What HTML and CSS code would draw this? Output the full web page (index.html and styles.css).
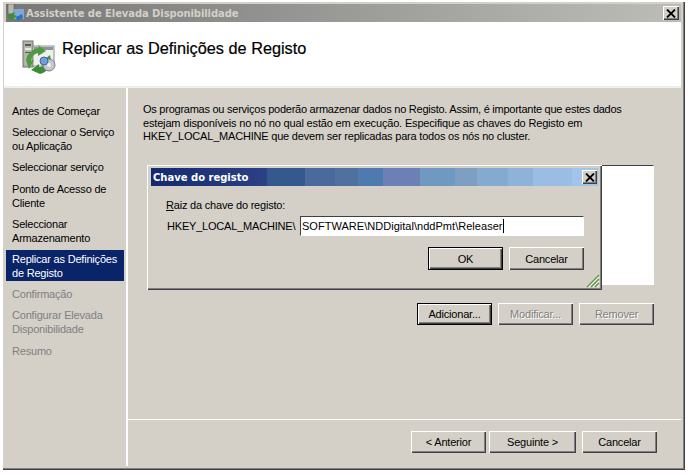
FILE: index.html
```html
<!DOCTYPE html>
<html lang="pt">
<head>
<meta charset="utf-8">
<title>Assistente de Elevada Disponibilidade</title>
<link rel="stylesheet" href="styles.css">
</head>
<body>
<div class="window">
  <div class="titlebar">
    <svg class="title-icon" width="18" height="18" viewBox="0 0 18 18">
      <rect x="1" y="0" width="6" height="10" fill="#b8b8b0" stroke="#555" stroke-width="0.6"/>
      <rect x="7" y="5" width="10" height="10" fill="#7fa8d8"/>
      <path d="M1 11 L8 8 L7 11 L10 12 L5 16 L1 14 Z" fill="#3f8f3a"/>
      <path d="M9 13 L15 10 L16 14 L10 17 Z" fill="#2f6fc0"/>
    </svg>
    <span class="title-text">Assistente de Elevada Disponibilidade</span>
    <button class="close close-main" aria-label="Fechar"><svg width="10" height="9" viewBox="0 0 10 9"><path d="M1 0.5 L9 8.5 M9 0.5 L1 8.5" stroke="#000" stroke-width="1.8"/></svg></button>
  </div>
  <header class="header">
    <svg class="header-icon" width="36" height="34" viewBox="0 0 36 34">
      <rect x="1" y="1" width="10" height="26" fill="#b4b4ac" stroke="#70706a"/>
      <rect x="3" y="4" width="6" height="2" fill="#5a5a55"/>
      <rect x="3" y="8" width="6" height="2" fill="#e8e8e0"/>
      <rect x="3" y="12" width="6" height="1" fill="#5a5a55"/>
      <rect x="11" y="6" width="21" height="20" fill="#eef0ee" stroke="#8a8f90"/>
      <rect x="12" y="7" width="19" height="3" fill="#8f9498"/>
      <path d="M4 20 Q6 10 17 8 L16 5 L24 11 L16 16 L16 13 Q10 14 9 21 L12 20 L7 29 Z" fill="#4e9a3e"/>
      <path d="M9 30 L18 34 Q26 32 28 24 L30 25 L28 15 L21 21 L24 22 Q22 27 17 27 L17 24 Z" fill="#3d8c35"/>
      <circle cx="27" cy="25" r="6" fill="#c4c8cc" stroke="#7d8288"/>
      <circle cx="22" cy="21" r="4" fill="#6f9fd8" stroke="#39689f"/>
      <circle cx="27" cy="25" r="2" fill="#eef0f2"/>
    </svg>
    <h1 class="heading">Replicar as Definições de Registo</h1>
  </header>
  <div class="body">
    <nav class="nav">
      <div class="step">Antes de Começar</div>
      <div class="step">Seleccionar o Serviço<br>ou Aplicação</div>
      <div class="step">Seleccionar serviço</div>
      <div class="step">Ponto de Acesso de<br>Cliente</div>
      <div class="step">Seleccionar<br>Armazenamento</div>
      <div class="step current">Replicar as Definições<br>de Registo</div>
      <div class="step muted">Confirmação</div>
      <div class="step muted">Configurar Elevada<br>Disponibilidade</div>
      <div class="step muted">Resumo</div>
    </nav>
    <main class="main">
      <div class="content">
        <p class="intro"><span class="line-tight">Os programas ou serviços poderão armazenar dados no Registo. Assim, é importante que estes dados</span><br><span class="line-loose">estejam disponíveis no nó no qual estão em execução. Especifique as chaves do Registo em</span><br>HKEY_LOCAL_MACHINE que devem ser replicadas para todos os nós no cluster.</p>
        <div class="listbox"></div>
        <div class="list-actions">
          <button class="btn default">Adicionar...</button>
          <button class="btn disabled">Modificar...</button>
          <button class="btn disabled">Remover</button>
        </div>
      </div>
      <footer class="footer">
        <button class="btn">&lt; Anterior</button>
        <button class="btn wide">Seguinte &gt;</button>
        <button class="btn cancel">Cancelar</button>
      </footer>
    </main>
  </div>
  <section class="dialog">
    <div class="dialog-title">
      <span>Chave do registo</span>
      <button class="close close-dialog" aria-label="Fechar"><svg width="10" height="9" viewBox="0 0 10 9"><path d="M1 0.5 L9 8.5 M9 0.5 L1 8.5" stroke="#000" stroke-width="1.8"/></svg></button>
    </div>
    <div class="dialog-body">
      <div class="field-label"><u>R</u>aiz da chave do registo:</div>
      <div class="field-row">
        <span class="prefix">HKEY_LOCAL_MACHINE\</span>
        <div class="input">SOFTWARE\NDDigital\nddPmt\Releaser<span class="caret"></span></div>
      </div>
      <div class="dialog-actions">
        <button class="btn default">OK</button>
        <button class="btn">Cancelar</button>
      </div>
    </div>
    <svg class="grip" width="14" height="14" viewBox="0 0 14 14">
      <path d="M13 1 L1 13 M13 5 L5 13 M13 9 L9 13" stroke="#5f9a4a" stroke-width="1.3"/>
      <path d="M13 3 L3 13 M13 7 L7 13 M13 11 L11 13" stroke="#ffffff" stroke-width="0.8"/>
    </svg>
  </section>
</div>
</body>
</html>
```

FILE: styles.css
```css
* { box-sizing: border-box; }
html, body { margin: 0; padding: 0; background: #fff; }
body {
  width: 688px;
  height: 475px;
  overflow: hidden;
  padding: 1px 0 0 2px;
  font-family: "Liberation Sans", Arial, sans-serif;
  font-size: 11px;
  letter-spacing: -0.2px;
  color: #000;
}
.window {
  position: relative;
  width: 683px;
  height: 469px;
  background: #d4d0c8;
  padding: 3px 4px 2px 2px;
  display: flex;
  flex-direction: column;
  box-shadow: inset 1px 1px 0 #fff, inset -1px -1px 0 #404040, inset -2px -2px 0 #808080;
}
.titlebar {
  height: 18px;
  margin-left: 2px;
  display: flex;
  align-items: center;
  background: linear-gradient(90deg, #777, #bdbdb8);
  flex: none;
}
.title-icon { margin-left: 1px; flex: none; }
.title-text {
  margin-left: 1px;
  font-family: "DejaVu Sans", Verdana, sans-serif;
  font-weight: bold;
  font-size: 10px;
  color: #d4d0c8;
  letter-spacing: -0.08px;
}
.close {
  width: 16px;
  height: 14px;
  padding: 0;
  border: 0;
  display: flex;
  align-items: center;
  justify-content: center;
  background: #d4d0c8;
  box-shadow: inset 1px 1px 0 #fff, inset -1px -1px 0 #404040, inset -2px -2px 0 #808080;
}
.close-main { margin-left: auto; margin-right: 2px; }
.close-dialog { margin-left: auto; margin-right: 1px; width: 15px; }
.header {
  height: 64px;
  background: #fff;
  flex: none;
  display: flex;
  align-items: flex-start;
  padding: 18px 0 0 18px;
}
.header-icon { flex: none; }
.heading {
  margin: 0 0 0 4px;
  font-size: 16.3px;
  line-height: 17px;
  font-weight: normal;
  letter-spacing: 0;
  -webkit-text-stroke: 0.2px #000;
}
.body {
  flex: 1;
  display: flex;
  margin-top: 2px;
  box-shadow: 0 -2px 0 #f0eee8;
  min-height: 0;
}
.nav {
  width: 124px;
  flex: none;
  padding: 14px 2px 0 2px;
  display: flex;
  flex-direction: column;
  gap: 4.2px;
  border-right: 2px solid #fff;
  margin-bottom: 2px;
  line-height: 14px;
  color: #000;
}
.step { padding: 2px 6px 1px; }
.step.current { background: #0a246a; color: #fff; }
.step.muted { color: #808080; }
.main {
  flex: 1;
  display: flex;
  flex-direction: column;
  min-width: 0;
}
.content {
  flex: 1;
  padding: 15px 27px 0 15px;
  min-height: 0;
}
.intro {
  margin: 0;
  line-height: 13.5px;
}
.line-tight { letter-spacing: -0.25px; }
.line-loose { letter-spacing: -0.17px; }
.listbox {
  margin: 21px 0 0 5px;
  height: 120px;
  background: #fff;
  border-top: 1px solid #404040;
  border-left: 1px solid #404040;
  border-right: 1px solid #fff;
  border-bottom: 1px solid #fff;
}
.list-actions {
  display: flex;
  justify-content: flex-end;
  gap: 6px;
  margin-top: 18px;
}
.btn {
  width: 75px;
  height: 22px;
  padding: 0;
  border: 0;
  background: #d4d0c8;
  font-family: "Liberation Sans", Arial, sans-serif;
  font-size: 11px;
  letter-spacing: -0.2px;
  color: #000;
  box-shadow: inset 1px 1px 0 #fff, inset -1px -1px 0 #404040, inset -2px -2px 0 #808080;
}
.btn.default { border: 1px solid #000; }
.btn.disabled { color: #808080; text-shadow: 1px 1px 0 #fff; }
.btn.wide { width: 87px; }
.btn.cancel { margin-left: 3px; }
.footer {
  height: 47px;
  flex: none;
  border-top: 1px solid #fff;
  margin-bottom: 2px;
  padding: 11px 24px 0 0;
  display: flex;
  justify-content: flex-end;
  gap: 3px;
}
.dialog {
  position: absolute;
  left: 145px;
  top: 164px;
  width: 455px;
  height: 125px;
  padding: 3px 4px;
  background: #d4d0c8;
  box-shadow: inset 1px 1px 0 #fff, inset -1px -1px 0 #404040, inset -2px -2px 0 #808080;
}
.dialog-title {
  height: 18px;
  display: flex;
  align-items: center;
  padding-left: 2px;
  background: linear-gradient(90deg,
    #14296f 0, #2c4085 116px,
    #35588f 116px, #35588f 154px,
    #4a6a9e 154px, #4a6a9e 184px,
    #50709f 184px, #50709f 207px,
    #4f7ab0 207px, #4f7ab0 232px,
    #6c80b6 232px, #6c80b6 269px,
    #7099c2 269px, #7099c2 304px,
    #7e9fc2 304px, #7e9fc2 326px,
    #84aacf 326px, #84aacf 357px,
    #8fb2d8 357px, #8fb2d8 382px,
    #9bbde4 382px, #9bbde4 421px,
    #a0c4ea 421px);
  color: #fff;
  font-family: "DejaVu Sans", Verdana, sans-serif;
  font-weight: bold;
  font-size: 10px;
  letter-spacing: 0;
}
.dialog-body { padding: 13px 14px 0 15px; }
.field-label { line-height: 13px; }
.field-row {
  display: flex;
  align-items: center;
  margin-top: 4px;
  height: 20px;
}
.prefix { margin-left: 1px; width: 133px; flex: none; white-space: nowrap; }
.input {
  width: 284px;
  height: 20px;
  background: #fff;
  padding: 2px 0 0 1px;
  line-height: 14px;
  letter-spacing: 0.03px;
  white-space: nowrap;
  border-top: 1px solid #404040;
  border-left: 1px solid #404040;
  border-right: 1px solid #fff;
  border-bottom: 1px solid #fff;
}
.caret {
  display: inline-block;
  width: 1px;
  height: 14px;
  background: #000;
  vertical-align: top;
}
.dialog-actions {
  display: flex;
  justify-content: flex-end;
  gap: 6px;
  margin-top: 11px;
}
.dialog-actions .btn { height: 23px; }
.grip { position: absolute; right: 2px; bottom: 2px; }
```
